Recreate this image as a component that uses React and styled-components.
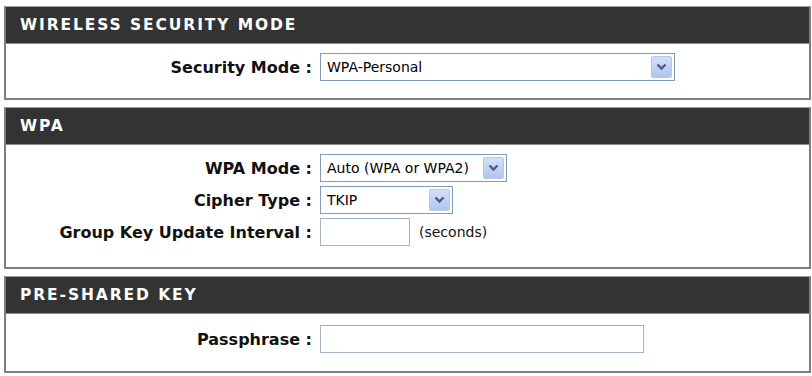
import styled, { createGlobalStyle } from "styled-components";

const GlobalStyle = createGlobalStyle`
  body {
    margin: 0;
    background: #ffffff;
    font-family: "DejaVu Sans", Verdana, sans-serif;
  }
`;

function Chevron() {
  return (
    <svg width="11" height="8" viewBox="0 0 11 8">
      <path d="M1.5 1.5 L5.5 5.5 L9.5 1.5" fill="none" stroke="#4a5d82" strokeWidth="2.4" />
    </svg>
  );
}

function Select({ value, width }) {
  return (
    <SelectBox $width={width}>
      <span>{value}</span>
      <ArrowButton>
        <Chevron />
      </ArrowButton>
    </SelectBox>
  );
}

export default function App() {
  return (
    <Page>
      <GlobalStyle />

      <Panel>
        <Header>WIRELESS SECURITY MODE</Header>
        <Body $top={9} $bottom={17}>
          <Label>Security Mode :</Label>
          <Select value="WPA-Personal" width={355} />
        </Body>
      </Panel>

      <Panel>
        <Header>WPA</Header>
        <Body $top={9} $bottom={21}>
          <Label>WPA Mode :</Label>
          <Select value="Auto (WPA or WPA2)" width={187} />
          <Label>Cipher Type :</Label>
          <Select value="TKIP" width={133} />
          <Label>Group Key Update Interval :</Label>
          <Field>
            <TextInput $width={90} />
            <Unit>(seconds)</Unit>
          </Field>
        </Body>
      </Panel>

      <Panel>
        <Header>PRE-SHARED KEY</Header>
        <Body $top={11} $bottom={18}>
          <Label>Passphrase :</Label>
          <TextInput $width={324} />
        </Body>
      </Panel>
    </Page>
  );
}

const Page = styled.div`
  padding: 6px 1px 0 4px;
  display: flex;
  flex-direction: column;
  gap: 7px;
`;

const Panel = styled.div`
  border: 2px solid #7e7e7e;
  border-top: 1px solid #a0a0a0;
  background: #ffffff;
`;

const Header = styled.div`
  height: 36px;
  background: #333333;
  border-bottom: 1px solid #8e8e8e;
  color: #ffffff;
  display: flex;
  align-items: center;
  padding-left: 14px;
  font-size: 15.5px;
  font-weight: bold;
  letter-spacing: 1.9px;
`;

const Body = styled.div`
  display: grid;
  grid-template-columns: 306px 1fr;
  column-gap: 8px;
  row-gap: 4px;
  align-items: center;
  padding: ${(p) => p.$top}px 0 ${(p) => p.$bottom}px 0;
`;

const Label = styled.div`
  text-align: right;
  font-size: 16px;
  font-weight: bold;
  color: #111111;
  white-space: nowrap;
`;

const SelectBox = styled.div`
  width: ${(p) => p.$width}px;
  height: 28px;
  box-sizing: border-box;
  border: 1px solid #7f9db9;
  background: #ffffff;
  display: flex;
  align-items: center;
  justify-content: space-between;
  padding: 0 2px 0 6px;
  font-size: 14px;
  color: #000000;
`;

const ArrowButton = styled.span`
  width: 21px;
  height: 22px;
  box-sizing: border-box;
  border: 1px solid #b5c8ec;
  border-radius: 2px;
  background: linear-gradient(#d3e0f9, #b0c6ee);
  display: flex;
  align-items: center;
  justify-content: center;
`;

const Field = styled.div`
  display: flex;
  align-items: center;
  gap: 9px;
`;

const TextInput = styled.div`
  width: ${(p) => p.$width}px;
  height: 28px;
  box-sizing: border-box;
  border: 1px solid #a5b5c9;
  border-top-color: #9cb0c8;
  background: #ffffff;
`;

const Unit = styled.span`
  font-size: 14px;
  color: #111111;
`;
